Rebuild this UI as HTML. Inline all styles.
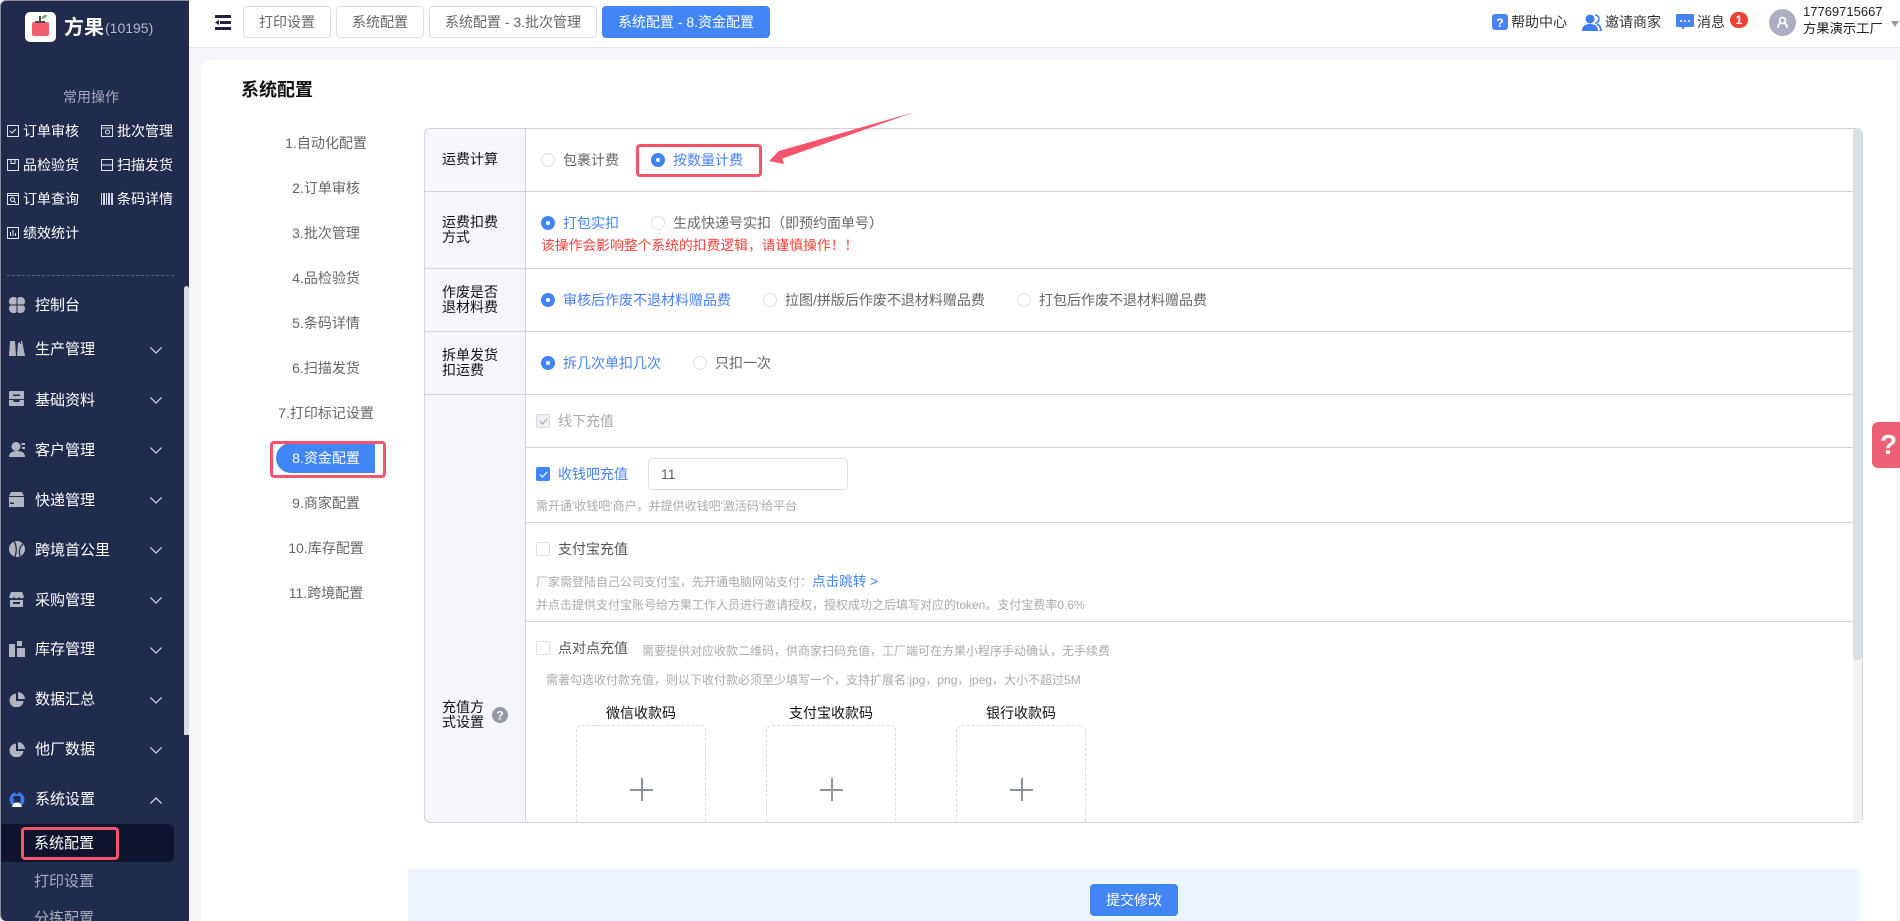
<!DOCTYPE html>
<html lang="zh-CN"><head><meta charset="utf-8"><title>系统配置</title>
<style>
*{box-sizing:border-box;margin:0;padding:0}
html,body{width:1900px;height:921px;overflow:hidden;background:#f5f6fa}
body{position:relative;font-family:"Liberation Sans","Noto Sans CJK SC",sans-serif;font-size:14px;color:#333}
.a{position:absolute}
.t{position:absolute;line-height:20px;height:20px;white-space:nowrap}
.side{position:absolute;left:0;top:0;width:189px;height:921px;background:#212b4e;border-left:1px solid #8b8e9b;border-top:1px solid #8b8e9b;border-radius:6px 0 0 6px;overflow:hidden}
.q{color:#fff;font-size:14px}
.m{color:#fff;font-size:15px}
.ic{position:absolute}
.chev{position:absolute;left:150px;width:12px;height:7px}
.tab{position:absolute;top:6px;height:32px;border:1px solid #dcdfe8;border-radius:4px;background:#fff;color:#666;text-align:center;line-height:30px;font-size:14px}
.nav{position:absolute;left:266px;width:120px;text-align:center;color:#666;line-height:20px;height:20px;font-size:14px}
.lb{position:absolute;left:442px;color:#111;line-height:15px;font-size:14px}
.r{position:absolute;width:14px;height:14px;border-radius:50%;border:1px solid #dcdfe6;background:#fff}
.r.on{background:#4285f4;border-color:#4285f4}
.r.on:after{content:"";position:absolute;left:4px;top:4px;width:4px;height:4px;background:#fff;border-radius:50%}
.g{color:#666}.b{color:#4a82f6}
.c{position:absolute;left:536px;width:14px;height:14px;border:1px solid #dcdfe6;border-radius:2px;background:#fff}
.h{position:absolute;font-size:12px;color:#aaa;line-height:18px;height:18px;white-space:nowrap}
.hl{position:absolute;left:526px;width:1327px;height:1px;background:#d2d3d8}
.rl{position:absolute;left:425px;width:1428px;height:1px;background:#d2d3d8}
.up{position:absolute;top:725px;width:130px;height:97px;border:1px dashed #d9d9d9;border-bottom:0;border-radius:6px 6px 0 0}
.up i,.up b{position:absolute;background:#8c939d}
.up i{left:53px;top:63px;width:23px;height:1.5px}
.up b{left:64px;top:52px;width:1.5px;height:23px}
.ul{position:absolute;top:703px;width:130px;text-align:center;color:#111;line-height:20px}
.red{position:absolute;border:3px solid #f5556c;border-radius:4px}
</style></head><body>

<!-- sidebar -->
<div class="side">
</div>
<div class="a" style="left:25px;top:12px;width:31px;height:30px;background:#fff;border-radius:5px"></div>
<svg class="ic" style="left:25px;top:12px" width="31" height="30" viewBox="0 0 31 30"><rect x="7" y="10" width="17" height="14" rx="2" fill="#f0606f"/><rect x="14" y="4" width="2" height="7" fill="#4a4a4a"/><rect x="10" y="9" width="10" height="2" fill="#5b4a4a"/><path d="M16 7Q18 2 22 3Q21 7 16 7Z" fill="#57b35a"/></svg>
<div class="t" style="left:64px;top:18px;font-size:20px;font-weight:700;color:#fff">方果</div>
<div class="t" style="left:105px;top:18px;font-size:14px;color:#b4b8c8">(10195)</div>
<div class="t" style="left:63px;top:87px;color:#a6abbb;font-size:14px">常用操作</div>

<svg class="ic" style="left:7px;top:125px" width="12" height="12" fill="none" stroke="#e8e9ee"><rect x=".5" y=".5" width="11" height="11"/><path d="M3 6l2 2 4-4"/></svg>
<div class="t q" style="left:23px;top:121px">订单审核</div>
<svg class="ic" style="left:101px;top:125px" width="12" height="12" fill="none" stroke="#d8dae2"><rect x=".5" y=".5" width="11" height="11"/><path d="M1 3h10"/><circle cx="6.500" cy="7" r="2"/></svg>
<div class="t q" style="left:117px;top:121px">批次管理</div>
<svg class="ic" style="left:7px;top:159px" width="12" height="12" fill="none" stroke="#e8e9ee"><path d="M.5 0v11.500h11V0M.5.500h11M4 .500v4h4v-4"/></svg>
<div class="t q" style="left:23px;top:155px">品检验货</div>
<svg class="ic" style="left:101px;top:159px" width="12" height="12" fill="none" stroke="#e8e9ee"><rect x=".5" y=".5" width="11" height="11"/><path d="M0 6h12"/></svg>
<div class="t q" style="left:117px;top:155px">扫描发货</div>
<svg class="ic" style="left:7px;top:193px" width="12" height="12" fill="none" stroke="#e8e9ee"><rect x=".5" y=".5" width="11" height="11"/><path d="M1 2.500h10"/><circle cx="5.500" cy="6.500" r="2"/><path d="M7 8l2 2"/></svg>
<div class="t q" style="left:23px;top:189px">订单查询</div>
<svg class="ic" style="left:101px;top:193px" width="12" height="12" fill="#d8dae2"><rect x="0" width="1" height="12"/><rect x="2" width="2" height="12"/><rect x="5" width="1" height="12"/><rect x="7" width="2" height="12"/><rect x="10" width="2" height="12"/></svg>
<div class="t q" style="left:117px;top:189px">条码详情</div>
<svg class="ic" style="left:7px;top:227px" width="12" height="12" fill="none" stroke="#e8e9ee"><rect x=".5" y=".5" width="11" height="11"/><path d="M3.500 9V5M6 9V3M8.500 9V6"/></svg>
<div class="t q" style="left:23px;top:223px">绩效统计</div>

<div class="a" style="left:7px;top:275px;width:167px;border-top:1px dashed #5c6480"></div>
<div class="a" style="left:184px;top:286px;width:5px;height:449px;background:#dcdde6;border-radius:3px 3px 0 0"></div>

<!-- menu icons -->
<svg class="ic" style="left:9px;top:297px" width="16" height="16" fill="#b2b4c0"><path d="M3.500 0h1.500q3 0 3 3v5H3.500Q0 8 0 4.500T3.500 0zM12.500 0H11q-3 0-3 3v5h4.500Q16 8 16 4.500T12.500 0zM3.500 16H5q3 0 3-3V8H3.500Q0 8 0 11.500T3.500 16zM12.500 16H11q-3 0-3-3V8h4.500q3.500 0 3.500 3.500T12.500 16z"/><path d="M8 0v16M0 8h16" stroke="#212b4e" stroke-width="1"/></svg>
<div class="t m" style="left:35px;top:340px;display:none"></div>
<div class="t m" style="left:35px;top:296px">控制台</div>

<svg class="ic" style="left:9px;top:341px" width="16" height="15" fill="#b2b4c0"><path d="M1 0h5l1 15H0zM8 15l1-13h1V1h1v2h1V0h1l3 15z"/></svg>
<div class="t m" style="left:35px;top:340px">生产管理</div>
<svg class="chev" style="top:347px" fill="none" stroke="#d8dae2" stroke-width="1.200"><path d="M.5.500L6 6l5.500-5.500"/></svg>

<svg class="ic" style="left:9px;top:391px" width="15" height="15" fill="#b2b4c0"><path d="M0 1q0-1 1-1h13q1 0 1 1v7H0zM0 9h4l1 2h5l1-2h4v5q0 1-1 1H1q-1 0-1-1z"/><rect x="4" y="3.500" width="7" height="1.500" fill="#212b4e"/></svg>
<div class="t m" style="left:35px;top:391px">基础资料</div>
<svg class="chev" style="top:397px" fill="none" stroke="#d8dae2" stroke-width="1.200"><path d="M.5.500L6 6l5.500-5.500"/></svg>

<svg class="ic" style="left:9px;top:442px" width="16" height="15" fill="#b2b4c0"><circle cx="7" cy="4.500" r="4.500"/><path d="M0 15q0-6 8-6t8 6zM12.500 1H16v2h-3.500zM13 5h3v2h-3z"/></svg>
<div class="t m" style="left:35px;top:441px">客户管理</div>
<svg class="chev" style="top:447px" fill="none" stroke="#d8dae2" stroke-width="1.200"><path d="M.5.500L6 6l5.500-5.500"/></svg>

<svg class="ic" style="left:9px;top:492px" width="15" height="15" fill="#b2b4c0"><path d="M2 0h11l2 4H0zM0 5h15v10H0z"/><rect x="1" y="10.500" width="4" height="1.500" fill="#212b4e"/></svg>
<div class="t m" style="left:35px;top:491px">快递管理</div>
<svg class="chev" style="top:497px" fill="none" stroke="#d8dae2" stroke-width="1.200"><path d="M.5.500L6 6l5.500-5.500"/></svg>

<svg class="ic" style="left:9px;top:541px" width="16" height="16"><circle cx="8" cy="8" r="8" fill="#b2b4c0"/><path d="M5 0Q9 7 6 16M14 3Q9 7 11 15" stroke="#212b4e" stroke-width="1.300" fill="none"/></svg>
<div class="t m" style="left:35px;top:541px">跨境首公里</div>
<svg class="chev" style="top:547px" fill="none" stroke="#d8dae2" stroke-width="1.200"><path d="M.5.500L6 6l5.500-5.500"/></svg>

<svg class="ic" style="left:9px;top:592px" width="15" height="15" fill="#b2b4c0"><path d="M2 0h11l2 5q-1 1.500-2.500 1.500T10 5q-1 1.500-2.500 1.500T5 5q-1 1.500-2.500 1.500T0 5zM1 8h13v7H1z"/><rect x="4" y="10" width="7" height="2" fill="#212b4e"/></svg>
<div class="t m" style="left:35px;top:591px">采购管理</div>
<svg class="chev" style="top:597px" fill="none" stroke="#d8dae2" stroke-width="1.200"><path d="M.5.500L6 6l5.500-5.500"/></svg>

<svg class="ic" style="left:9px;top:641px" width="16" height="16" fill="#b2b4c0"><rect y="3" width="6" height="13"/><rect x="8" width="5" height="5"/><rect x="8" y="7" width="8" height="9"/></svg>
<div class="t m" style="left:35px;top:640px">库存管理</div>
<svg class="chev" style="top:647px" fill="none" stroke="#d8dae2" stroke-width="1.200"><path d="M.5.500L6 6l5.500-5.500"/></svg>

<svg class="ic" style="left:9px;top:692px" width="16" height="15" fill="#b2b4c0"><path d="M7 1.500A7 7 0 1 0 14.500 9H7zM9 0v7h7A7.500 7.500 0 0 0 9 0z"/></svg>
<div class="t m" style="left:35px;top:690px">数据汇总</div>
<svg class="chev" style="top:697px" fill="none" stroke="#d8dae2" stroke-width="1.200"><path d="M.5.500L6 6l5.500-5.500"/></svg>

<svg class="ic" style="left:9px;top:742px" width="16" height="15" fill="#b2b4c0"><path d="M7 1.500A7 7 0 1 0 14.500 9H7zM9 0v7h7A7.500 7.500 0 0 0 9 0z"/></svg>
<div class="t m" style="left:35px;top:740px">他厂数据</div>
<svg class="chev" style="top:747px" fill="none" stroke="#d8dae2" stroke-width="1.200"><path d="M.5.500L6 6l5.500-5.500"/></svg>

<svg class="ic" style="left:9px;top:792px" width="16" height="15"><circle cx="8" cy="7.500" r="7.500" fill="#3f7cf0"/><rect x="4.500" y="4" width="7" height="6.500" fill="#212b4e"/><path d="M3 15q1-4.500 5-4.500t5 4.500q-5 1.500-10 0z" fill="#fff"/><path d="M8-1v3" stroke="#212b4e" stroke-width="3" /></svg>
<div class="t m" style="left:35px;top:790px">系统设置</div>
<svg class="chev" style="top:797px" fill="none" stroke="#e8e9ee" stroke-width="1.200"><path d="M.5 6.500L6 1l5.500 5.500"/></svg>

<div class="a" style="left:1px;top:824px;width:173px;height:38px;background:#10152f;border-radius:0 6px 6px 0"></div>
<div class="t m" style="left:34px;top:834px">系统配置</div>
<div class="red" style="left:21px;top:827px;width:98px;height:33px"></div>
<div class="t" style="left:34px;top:872px;font-size:15px;color:#a9adbc">打印设置</div>
<div class="t" style="left:34px;top:909px;font-size:15px;color:#a9adbc">分拣配置</div>

<!-- top bar -->
<div class="a" style="left:189px;top:0;width:1711px;height:48px;background:#fff;border-bottom:1px solid #e4e6ec"></div>
<svg class="ic" style="left:215px;top:15px" width="16" height="15" fill="#22233a"><rect width="16" height="3"/><rect x="5" y="6" width="11" height="3"/><rect y="12" width="16" height="3"/><path d="M0 7.500L4 5v5z"/></svg>
<div class="tab" style="left:243px;width:88px">打印设置</div>
<div class="tab" style="left:336px;width:88px">系统配置</div>
<div class="tab" style="left:429px;width:168px">系统配置 - 3.批次管理</div>
<div class="tab" style="left:602px;width:168px;background:#4285f4;border-color:#4285f4;color:#fff">系统配置 - 8.资金配置</div>

<svg class="ic" style="left:1492px;top:14px" width="16" height="17"><rect width="16" height="16" rx="3" fill="#4a82f6"/><text x="8" y="13" font-size="12" font-weight="700" text-anchor="middle" fill="#fff" font-family="Liberation Sans">?</text></svg>
<div class="t" style="left:1511px;top:12px;color:#333">帮助中心</div>
<svg class="ic" style="left:1582px;top:14px" width="20" height="17" fill="#3f7cf0"><circle cx="8" cy="5" r="4.500"/><path d="M0 17q0-7 8-7t8 7z"/><path d="M13 1a4 4 0 0 1 0 8M15 10q4 2 4 7h-2" fill="none" stroke="#3f7cf0" stroke-width="1.600"/></svg>
<div class="t" style="left:1605px;top:12px;color:#333">邀请商家</div>
<svg class="ic" style="left:1676px;top:14px" width="18" height="17"><path d="M1 0h16q1 0 1 1v11q0 1-1 1H9l-3 3v-3H1q-1 0-1-1V1q0-1 1-1z" fill="#4a82f6"/><circle cx="5" cy="7" r="1" fill="#fff"/><circle cx="9" cy="7" r="1" fill="#fff"/><circle cx="13" cy="7" r="1" fill="#fff"/></svg>
<div class="t" style="left:1697px;top:12px;color:#333">消息</div>
<div class="a" style="left:1730px;top:12px;width:18px;height:16px;background:#ea4335;border-radius:8px;color:#fff;font-size:12px;font-weight:700;text-align:center;line-height:16px">1</div>
<div class="a" style="left:1769px;top:9px;width:27px;height:27px;background:#acafc2;border-radius:50%"></div>
<svg class="ic" style="left:1776px;top:16px" width="13" height="13" fill="none" stroke="#fff" stroke-width="1.700"><circle cx="6.500" cy="4.500" r="3"/><path d="M2 12q0-4 2.500-4.500M11 12q0-4-2.500-4.500"/></svg>
<div class="t" style="left:1803px;top:2px;font-size:13px;color:#222">17769715667</div>
<div class="t" style="left:1803px;top:19px;font-size:13.300px;color:#222">方果演示工厂</div>
<div class="a" style="left:1891px;top:21px;width:0;height:0;border:4.500px solid transparent;border-top:6px solid #999;border-bottom:0"></div>

<!-- panel -->
<div class="a" style="left:201px;top:60px;width:1695px;height:861px;background:#fff;border-radius:10px 0 0 0"></div>
<div class="t" style="left:241px;top:80px;font-size:18px;font-weight:700;color:#111">系统配置</div>

<!-- left nav -->
<div class="nav" style="top:133px">1.自动化配置</div>
<div class="nav" style="top:178px">2.订单审核</div>
<div class="nav" style="top:223px">3.批次管理</div>
<div class="nav" style="top:268px">4.品检验货</div>
<div class="nav" style="top:313px">5.条码详情</div>
<div class="nav" style="top:358px">6.扫描发货</div>
<div class="nav" style="top:403px">7.打印标记设置</div>
<div class="a" style="left:276px;top:443px;width:99px;height:30px;background:#4285f4;border-radius:15px 0 0 15px"></div>
<div class="nav" style="top:448px;color:#fff">8.资金配置</div>
<div class="red" style="left:270px;top:441px;width:116px;height:37px"></div>
<div class="nav" style="top:493px">9.商家配置</div>
<div class="nav" style="top:538px">10.库存配置</div>
<div class="nav" style="top:583px">11.跨境配置</div>

<!-- table -->
<div class="a" style="left:424px;top:128px;width:101px;height:694px;background:#f5f6fb;border-radius:6px 0 0 6px"></div>
<div class="a" style="left:424px;top:128px;width:1439px;height:695px;border:1px solid #d2d3d8;border-radius:6px"></div>
<div class="a" style="left:525px;top:128px;width:1px;height:694px;background:#d2d3d8"></div>
<div class="rl" style="top:191px"></div><div class="rl" style="top:268px"></div><div class="rl" style="top:331px"></div><div class="rl" style="top:394px"></div>
<div class="hl" style="top:447px"></div><div class="hl" style="top:522px"></div><div class="hl" style="top:621px"></div>
<div class="a" style="left:1853px;top:129px;width:9px;height:693px;background:#f4f4f4"></div>
<div class="a" style="left:1853px;top:128px;width:9px;height:532px;background:#dbdfe7;border-radius:4px"></div>

<div class="lb" style="top:152px">运费计算</div>
<div class="lb" style="top:215px">运费扣费<br>方式</div>
<div class="lb" style="top:285px">作废是否<br>退材料费</div>
<div class="lb" style="top:348px">拆单发货<br>扣运费</div>
<div class="lb" style="top:700px">充值方<br>式设置</div>
<svg class="ic" style="left:492px;top:707px" width="16" height="16"><circle cx="8" cy="8" r="8" fill="#9498a6"/><text x="8" y="12.500" font-size="12" font-weight="700" text-anchor="middle" fill="#fff" font-family="Liberation Sans">?</text></svg>

<!-- row1 -->
<div class="r" style="left:541px;top:153px"></div><div class="t g" style="left:563px;top:150px">包裹计费</div>
<div class="r on" style="left:651px;top:153px"></div><div class="t b" style="left:673px;top:150px">按数量计费</div>
<div class="red" style="left:636px;top:144px;width:126px;height:33px"></div>
<svg class="ic" style="left:760px;top:105px" width="165" height="65"><path d="M9 56L19 46L155 7L22.500 53.500L24 59Z" fill="#f5556c"/></svg>
<!-- row2 -->
<div class="r on" style="left:541px;top:216px"></div><div class="t b" style="left:563px;top:213px">打包实扣</div>
<div class="r" style="left:651px;top:216px"></div><div class="t g" style="left:673px;top:213px">生成快递号实扣（即预约面单号）</div>
<div class="t" style="left:541px;top:236px;color:#f4423c;font-size:13.800px">该操作会影响整个系统的扣费逻辑，请谨慎操作！！</div>
<!-- row3 -->
<div class="r on" style="left:541px;top:293px"></div><div class="t b" style="left:563px;top:290px">审核后作废不退材料赠品费</div>
<div class="r" style="left:763px;top:293px"></div><div class="t g" style="left:785px;top:290px">拉图/拼版后作废不退材料赠品费</div>
<div class="r" style="left:1017px;top:293px"></div><div class="t g" style="left:1039px;top:290px">打包后作废不退材料赠品费</div>
<!-- row4 -->
<div class="r on" style="left:541px;top:356px"></div><div class="t b" style="left:563px;top:353px">拆几次单扣几次</div>
<div class="r" style="left:693px;top:356px"></div><div class="t g" style="left:715px;top:353px">只扣一次</div>
<!-- row5 -->
<div class="c" style="top:414px;background:#eef0f4;border-color:#d8dae3"></div>
<svg class="ic" style="left:539px;top:418px" width="9" height="7" fill="none" stroke="#aaa" stroke-width="1.200"><path d="M1 3.500l2.500 2.500L8 1"/></svg>
<div class="t" style="left:558px;top:411px;color:#aaa">线下充值</div>

<div class="c" style="top:467px;background:#4285f4;border-color:#4285f4"></div>
<svg class="ic" style="left:539px;top:471px" width="9" height="7" fill="none" stroke="#fff" stroke-width="1.200"><path d="M1 3.500l2.500 2.500L8 1"/></svg>
<div class="t b" style="left:558px;top:464px">收钱吧充值</div>
<div class="a" style="left:648px;top:458px;width:200px;height:32px;border:1px solid #dcdfe6;border-radius:4px;background:#fff;padding-left:12px;line-height:30px;color:#606266">11</div>
<div class="h" style="left:536px;top:497px">需开通'收钱吧'商户，并提供收钱吧'激活码'给平台</div>

<div class="c" style="top:542px"></div>
<div class="t" style="left:558px;top:539px;color:#555">支付宝充值</div>
<div class="h" style="left:536px;top:573px">厂家需登陆自己公司支付宝，先开通电脑网站支付：</div>
<div class="t" style="left:812px;top:572px;color:#4285f4;font-size:13.600px">点击跳转 &gt;</div>
<div class="h" style="left:536px;top:596px">并点击提供支付宝账号给方果工作人员进行邀请授权，授权成功之后填写对应的token。支付宝费率0.6%</div>

<div class="c" style="top:641px"></div>
<div class="t" style="left:558px;top:638px;color:#555">点对点充值</div>
<div class="h" style="left:642px;top:642px">需要提供对应收款二维码，供商家扫码充值，工厂端可在方果小程序手动确认，无手续费</div>
<div class="h" style="left:546px;top:671px">需著勾选收付款充值，则以下收付款必须至少填写一个，支持扩展名:jpg，png，jpeg，大小不超过5M</div>

<div class="ul" style="left:576px">微信收款码</div>
<div class="ul" style="left:766px">支付宝收款码</div>
<div class="ul" style="left:956px">银行收款码</div>
<div class="up" style="left:576px"><i></i><b></b></div>
<div class="up" style="left:766px"><i></i><b></b></div>
<div class="up" style="left:956px"><i></i><b></b></div>

<!-- footer -->
<div class="a" style="left:408px;top:869px;width:1452px;height:52px;background:#edf4fe"></div>
<div class="a" style="left:1090px;top:884px;width:88px;height:32px;background:#4285f4;border-radius:4px;color:#fff;text-align:center;line-height:32px">提交修改</div>

<!-- floating help -->
<div class="a" style="left:1872px;top:422px;width:28px;height:46px;background:#ee6174;border-radius:6px 0 0 6px;color:#fff;font-size:28px;font-weight:700;line-height:46px;padding-left:8px;font-family:'Liberation Sans',sans-serif">?</div>
</body></html>
